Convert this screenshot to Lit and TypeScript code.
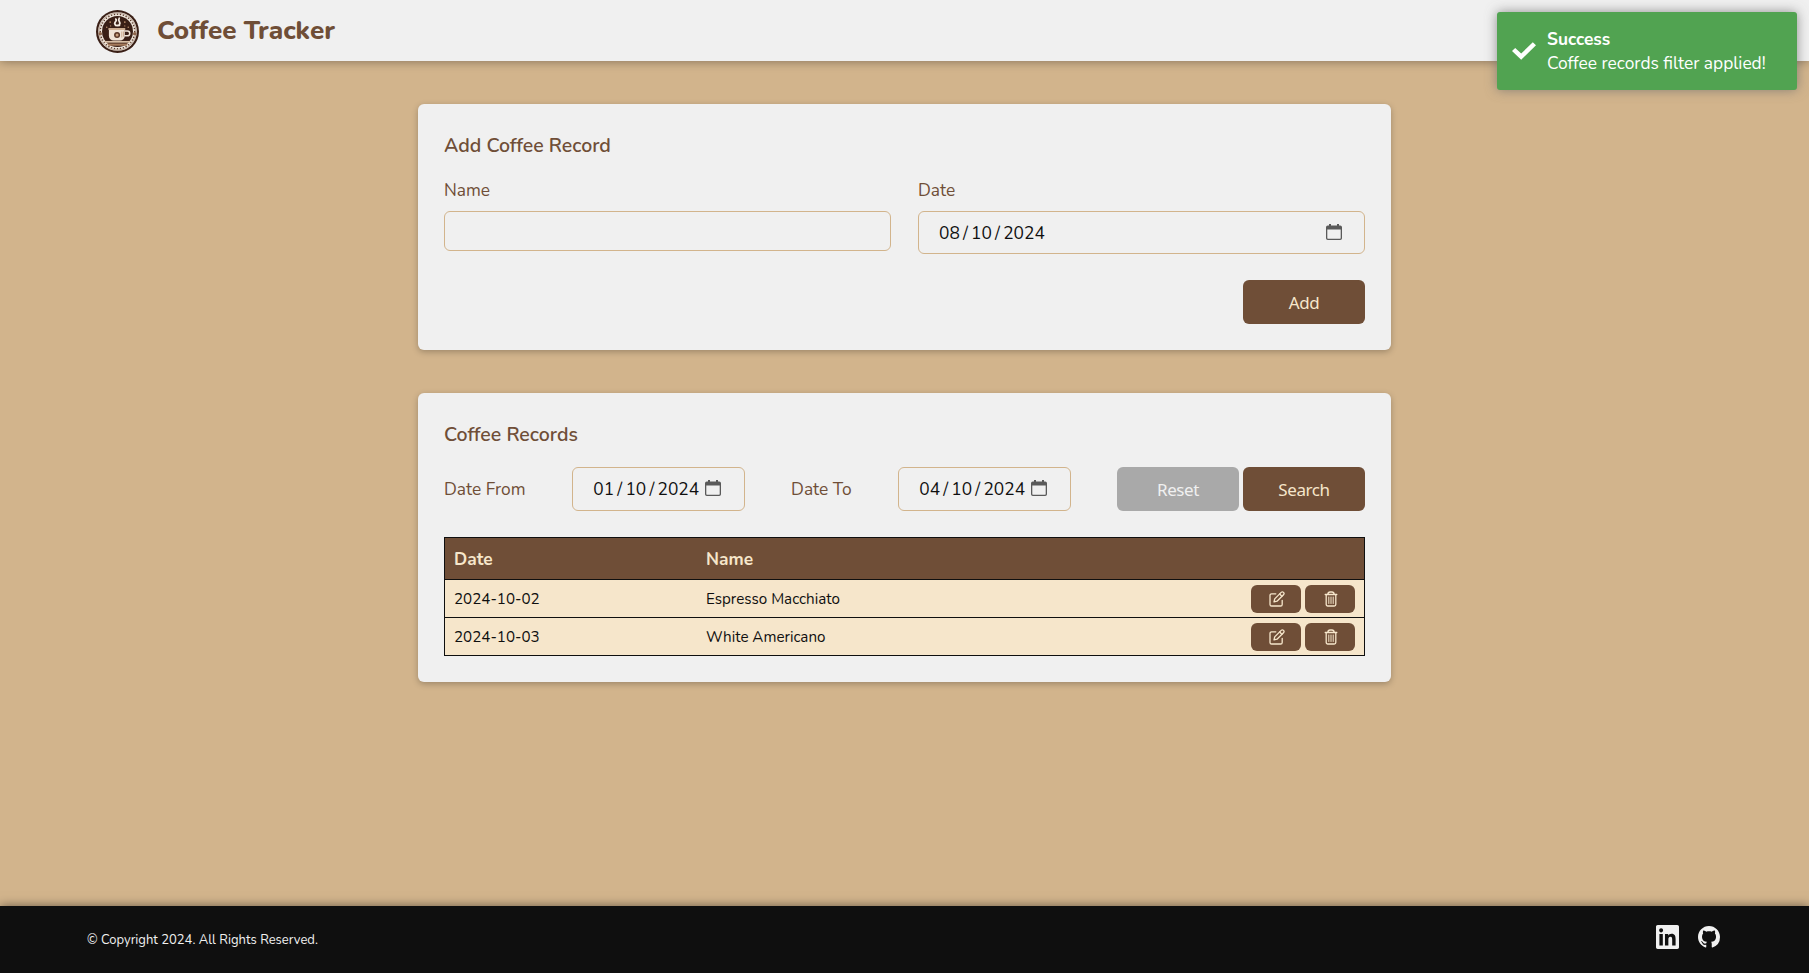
import { LitElement, html, css, svg } from "lit";
import { customElement } from "lit/decorators.js";

const calendar = html`<svg class="cal" viewBox="0 0 16 16" width="16" height="16">
  <path fill="#5a5a5a" fill-rule="evenodd" d="M3 0h2v1.500h6V0h2v1.500h1.200A1.800 1.800 0 0 1 16 3.300v10.900A1.800 1.800 0 0 1 14.200 16H1.800A1.800 1.800 0 0 1 0 14.200V3.300A1.800 1.800 0 0 1 1.800 1.500H3zM1.300 5.600v8.500a.6.6 0 0 0 .6.6h12.200a.6.6 0 0 0 .6-.6V5.600z"/></svg>`;

const dots = (n: number, r: number, size: number) =>
  Array.from({ length: n }, (_, i) => {
    const a = (i * 2 * Math.PI) / n;
    return svg`<circle cx=${50 + r * Math.cos(a)} cy=${50 + r * Math.sin(a)} r=${size} fill="#5a3b2c"/>`;
  });

const logo = html`<svg class="logo" viewBox="0 0 100 100" width="43" height="43">
  <circle cx="50" cy="50" r="50" fill="#3a1f16"/>
  <circle cx="50" cy="50" r="45" fill="#efe6dc"/>
  <circle cx="50" cy="50" r="43" fill="none" stroke="#7a5a48" stroke-width="1"/>
  ${dots(36, 40, 1.8)}
  <circle cx="50" cy="50" r="36" fill="#3a1f16"/>
  <g fill="#b98d6b">
    <circle cx="25" cy="40" r="1.800"/><circle cx="33" cy="28" r="2"/><circle cx="67" cy="28" r="2"/>
    <circle cx="75" cy="40" r="1.800"/><circle cx="34" cy="37" r="1.400"/><circle cx="67" cy="37" r="1.400"/>
  </g>
  <g fill="none" stroke="#f5ece2" stroke-width="4" stroke-linecap="round">
    <path d="M45 34c-6-5 6-8 1-13M54 34c6-5-5-8 0-15"/>
  </g>
  <ellipse cx="50" cy="36" rx="7" ry="2.200" fill="#f5ece2"/>
  <path d="M30 43h37v17c0 7-5 11-11 11H41c-6 0-11-4-11-11z" fill="#efe3d6"/>
  <path d="M29 42h39v4.500H29z" fill="#cfae92"/>
  <path d="M67 49h6a5.500 5.500 0 0 1 0 11h-7" fill="none" stroke="#efe3d6" stroke-width="3.600"/>
  <circle cx="49" cy="58" r="7" fill="#5a3626"/><circle cx="49" cy="58" r="3.500" fill="#c79f7e"/>
  <path d="M60 50v14M64 50v12" stroke="#b98d6b" stroke-width="1.500"/>
  <path d="M20 72h60v4H20z" fill="#d9bfa6"/>
  <path d="M25 78h50l-5 5H30z" fill="#a57a5b"/>
  <circle cx="10" cy="55" r="4" fill="#8d644b"/><circle cx="90" cy="55" r="4" fill="#8d644b"/>
</svg>`;

const editIcon = html`<svg viewBox="0 0 16 16" width="16" height="16" fill="none" stroke="#f6e6cb" stroke-width="1.300" stroke-linejoin="round" stroke-linecap="round">
  <path d="M6.800 2.800H2.600A1.600 1.600 0 0 0 1 4.400v9A1.600 1.600 0 0 0 2.600 15h9a1.600 1.600 0 0 0 1.600-1.600V9.300"/>
  <path d="M5 10.900l.7-3L12.200 1.400a1.600 1.600 0 0 1 2.300 2.300L8 10.200z"/><path d="M10.700 3l2.200 2.200"/></svg>`;

const trashIcon = html`<svg viewBox="0 0 16 16" width="16" height="16" fill="none" stroke="#f6e6cb" stroke-width="1.300" stroke-linejoin="round" stroke-linecap="round">
  <path d="M2.200 3.500h11.600M4.800 3.300C5 1.700 5.800 1 7 1h2c1.200 0 2 .7 2.200 2.300M3.200 3.700v9.800A1.500 1.500 0 0 0 4.700 15h6.600a1.500 1.500 0 0 0 1.500-1.500V3.700"/>
  <path d="M5.800 6v6.500M8 6v6.500M10.200 6v6.500" stroke-width="1"/></svg>`;

const dateText = (d: string, m: string, y: string) =>
  html`<span class="date">${d}<span class="sep">/</span>${m}<span class="sep">/</span>${y}</span>`;

@customElement("app-root")
class AppRoot extends LitElement {
  static styles = css`
    :host {
      display: flex; flex-direction: column; height: 973px; position: relative; overflow: hidden;
      background: #d2b48c; color: #0f0f0f;
      font: 17.333px/26px Nunito, Lato, sans-serif;
    }
    * { box-sizing: border-box; }
    svg { display: block; flex: none; }
    header {
      height: 61px; flex: none; background: #f0f0f0; padding: 0 96px; display: flex; align-items: center;
      box-shadow: 0 0 10px rgba(0, 0, 0, 0.4);
    }
    .logo { margin-top: 1px; }
    h1 { margin: 0 0 0 18px; font-size: 26px; line-height: 36px; font-weight: 800; color: #6f4e37; }
    main { flex: 1; display: flex; flex-direction: column; align-items: center; gap: 43px; padding-top: 43px; }
    .card {
      width: 973px; background: #f0f0f0; border-radius: 6px; padding: 26px;
      box-shadow: 0 2px 6px rgba(0, 0, 0, 0.25); color: #6f4e37;
    }
    .add { height: 246px; }
    .list { height: 289px; }
    h2 { margin: 2px 0 0; font-size: 19.500px; line-height: 28px; font-weight: 600; }
    .fields { display: grid; grid-template-columns: 1fr 1fr; column-gap: 27px; margin-top: 18px; height: 88px; align-items: start; }
    .field { display: flex; flex-direction: column; gap: 9px; line-height: 24px; }
    .box {
      border: 1px solid #d2b48c; border-radius: 6px; height: 43px; color: #0f0f0f;
      display: flex; align-items: center; padding: 0 22px 0 20px; justify-content: space-between;
    }
    .box.empty { height: 40px; }
    .box.small { width: 173px; height: 44px; padding: 0 22.500px 0 20.500px; }
    .date { display: flex; }
    .sep { width: 11.300px; text-align: center; }
    .cal { margin-top: -2px; }
    .actions { display: flex; justify-content: flex-end; margin-top: 14px; }
    .btn {
      width: 122px; height: 44px; border-radius: 6px; background: #6f4e37; color: #f6e6cb; padding-top: 1px;
      display: flex; align-items: center; justify-content: center;
      font-family: "Noto Sans", sans-serif; font-size: 17px; letter-spacing: -0.400px;
    }
    .btn.muted { background: #a9a9a9; color: #f0f0f0; }
    .filter { display: flex; justify-content: space-between; align-items: center; height: 44px; margin-top: 18px; }
    .pair { display: flex; gap: 4px; }
    .table { margin-top: 26px; border: 1px solid #0f0f0f; color: #0f0f0f; font-size: 15.167px; }
    .row {
      display: grid; grid-template-columns: 252px 1fr auto; height: 38px; align-items: center;
      padding: 0 9px; border-top: 1px solid #0f0f0f; background: #f6e6cb;
    }
    .row.head { height: 41px; border-top: 0; padding-top: 1px; background: #6f4e37; color: #f6e6cb; font-size: 17.333px; font-weight: 700; }
    .icon {
      width: 50px; height: 28px; border-radius: 6px; background: #6f4e37; padding-left: 1px;
      display: flex; align-items: center; justify-content: center;
    }
    footer {
      height: 67px; flex: none; background: #0f0f0f; color: #f0f0f0; display: flex; align-items: center;
      justify-content: space-between; padding: 0 89px 0 87px; font-size: 13px; box-shadow: 0 0 10px rgba(0, 0, 0, 0.5);
    }
    .social { display: flex; gap: 19px; align-items: center; margin-top: -5px; }
    .toast {
      position: absolute; top: 12px; right: 12px; width: 300px; height: 78px; border-radius: 3px; background: #51a351;
      color: #fff; padding: 15px; display: flex; align-items: center; gap: 11px; line-height: 24px;
      box-shadow: 0 0 12px rgba(110, 110, 110, 0.75);
    }
    .msg { display: flex; flex-direction: column; white-space: nowrap; }
    .strong { font-weight: 700; }
  `;

  private records = [
    { date: "2024-10-02", name: "Espresso Macchiato" },
    { date: "2024-10-03", name: "White Americano" },
  ];

  render() {
    return html`
      <header>${logo}<h1>Coffee Tracker</h1></header>
      <main>
        <section class="card add">
          <h2>Add Coffee Record</h2>
          <div class="fields">
            <div class="field"><span>Name</span><div class="box empty"></div></div>
            <div class="field"><span>Date</span><div class="box">${dateText("08", "10", "2024")}${calendar}</div></div>
          </div>
          <div class="actions"><div class="btn">Add</div></div>
        </section>
        <section class="card list">
          <h2>Coffee Records</h2>
          <div class="filter">
            <span>Date From</span>
            <div class="box small">${dateText("01", "10", "2024")}${calendar}</div>
            <span>Date To</span>
            <div class="box small">${dateText("04", "10", "2024")}${calendar}</div>
            <div class="pair"><div class="btn muted">Reset</div><div class="btn">Search</div></div>
          </div>
          <div class="table">
            <div class="row head"><span>Date</span><span>Name</span></div>
            ${this.records.map(
              (r) => html`<div class="row"><span>${r.date}</span><span>${r.name}</span>
                <div class="pair"><div class="icon">${editIcon}</div><div class="icon">${trashIcon}</div></div></div>`
            )}
          </div>
        </section>
      </main>
      <footer>
        <span>© Copyright 2024. All Rights Reserved.</span>
        <div class="social">
          <svg viewBox="0 0 24 24" width="23" height="24" preserveAspectRatio="none"><path fill="#f0f0f0" d="M20.447 20.452h-3.554v-5.569c0-1.328-.027-3.037-1.852-3.037-1.853 0-2.136 1.445-2.136 2.939v5.667H9.351V9h3.414v1.561h.046c.477-.9 1.637-1.850 3.370-1.850 3.601 0 4.267 2.370 4.267 5.455v6.286zM5.337 7.433c-1.144 0-2.063-.926-2.063-2.065 0-1.138.92-2.063 2.063-2.063 1.140 0 2.064.925 2.064 2.063 0 1.139-.925 2.065-2.064 2.065zm1.782 13.019H3.555V9h3.564v11.452zM22.225 0H1.771C.792 0 0 .774 0 1.729v20.542C0 23.227.792 24 1.771 24h20.451C23.200 24 24 23.227 24 22.271V1.729C24 .774 23.200 0 22.222 0h.003z"/></svg>
          <svg viewBox="0 0 16 16" width="22" height="22"><path fill="#f0f0f0" d="M8 0C3.580 0 0 3.580 0 8c0 3.540 2.290 6.530 5.470 7.590.4.070.55-.17.55-.38 0-.19-.01-.82-.01-1.490-2.010.37-2.530-.49-2.690-.94-.09-.23-.48-.94-.82-1.130-.28-.15-.68-.52-.01-.53.63-.01 1.080.58 1.230.82.72 1.210 1.870.87 2.330.66.07-.52.28-.87.51-1.070-1.780-.2-3.640-.89-3.640-3.950 0-.87.31-1.590.82-2.150-.08-.2-.36-1.020.08-2.120 0 0 .67-.21 2.200.82.64-.18 1.320-.27 2-.27s1.360.09 2 .27c1.530-1.040 2.200-.82 2.200-.82.44 1.100.16 1.920.08 2.120.51.56.82 1.270.82 2.150 0 3.070-1.870 3.750-3.650 3.950.29.25.54.73.54 1.480 0 1.070-.01 1.930-.01 2.200 0 .21.15.46.55.38A8.010 8.010 0 0 0 16 8c0-4.420-3.580-8-8-8z"/></svg>
        </div>
      </footer>
      <div class="toast">
        <svg viewBox="0 0 24 18" width="24" height="18"><path fill="#fff" d="M20.800 0.300L24 3.300 9.200 17.700 0 9l3.200-3.100 6 5.700z"/></svg>
        <div class="msg"><span class="strong">Success</span><span>Coffee records filter applied!</span></div>
      </div>
    `;
  }
}
